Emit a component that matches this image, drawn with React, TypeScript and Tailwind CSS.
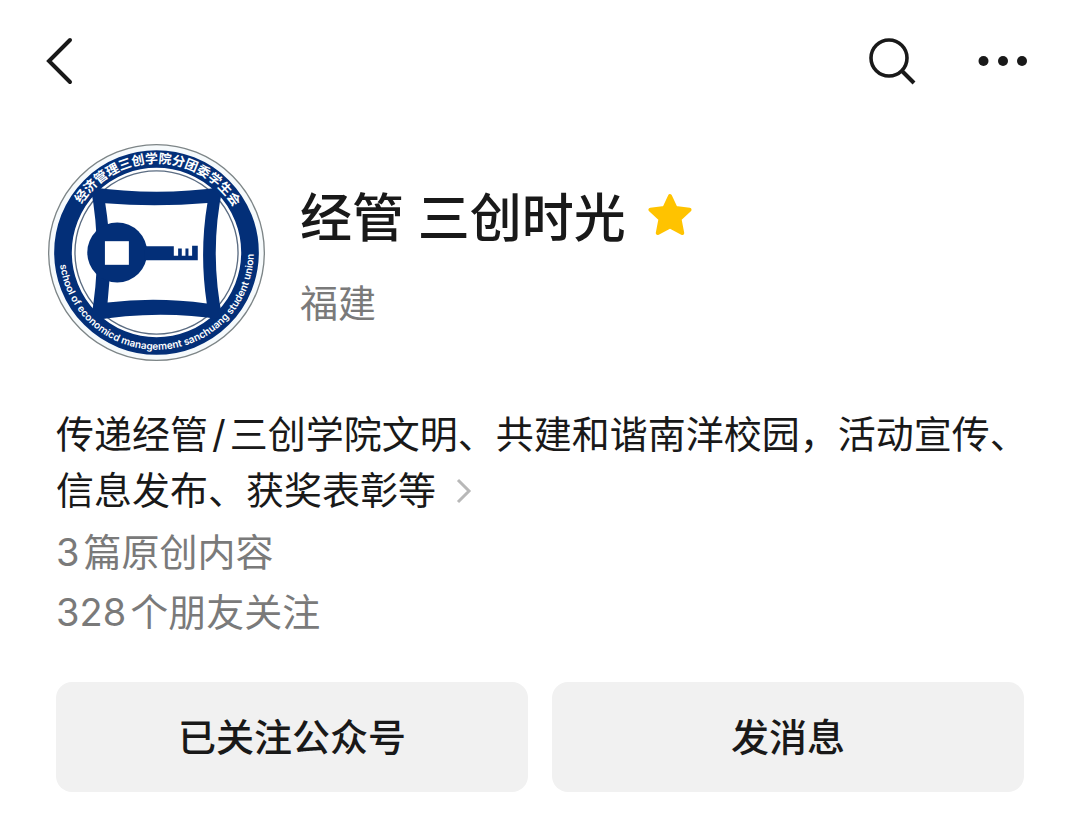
const cjk = "font-['Inter','Noto_Sans_CJK_SC',sans-serif]";

function Emblem() {
  return (
    <svg viewBox="24 26 652 652" className="size-[217px] shrink-0" role="img" aria-label="经管 三创时光">
      <defs>
        <path id="arc-top" d="M82 352 A268 268 0 0 1 618 352" />
        <path id="arc-bottom" d="M58 352 A292 292 0 0 0 642 352" />
      </defs>
      <circle cx="350" cy="352" r="324" fill="#f6fafc" stroke="#7d8587" strokeWidth="4" />
      <circle cx="350" cy="352" r="281" fill="#fff" stroke="#032f78" strokeWidth="53" />
      <circle cx="350" cy="352" r="245" fill="#fff" stroke="#5b6c82" strokeWidth="4" />
      <path
        fill="#032f78"
        fillRule="evenodd"
        d="M152 155 Q350 184 549 155 Q507 352 549 554 Q350 522 152 558 Q190 352 152 155 Z M196 204 Q350 216 503 203 Q478 352 501 505 Q350 484 203 502 Q220 352 196 204 Z"
      />
      <circle cx="232" cy="352" r="90" fill="#032f78" />
      <path fill="#032f78" d="M315 333 H402 V362 H415 V340 H426 V362 H437 V340 H446 V362 H457 V332 H474 V375 H315 Z" />
      <rect x="195" y="318" width="72" height="71" fill="#fff" />
      <text className="font-['Noto_Sans_CJK_SC',sans-serif] font-bold" fontSize="39" fill="#fff" textAnchor="middle">
        <textPath href="#arc-top" startOffset="50.6%">经济管理三创学院分团委学生会</textPath>
      </text>
      <text className="font-['Inter',sans-serif] font-semibold" fontSize="30" fill="#fff" textAnchor="middle">
        <textPath href="#arc-bottom" startOffset="51.8%">school of economicd management sanchuang student union</textPath>
      </text>
    </svg>
  );
}

export default function App() {
  return (
    <div className={`min-h-screen bg-white text-[#191919] ${cjk}`} lang="zh-CN">
      <header className="flex h-[122px] items-center justify-between px-10">
        <button type="button" aria-label="返回" className="p-1">
          <svg width="32" height="48" viewBox="0 0 32 48" fill="none" stroke="#191919" strokeWidth="4" strokeLinecap="round">
            <path d="M26 3 L5 24 L26 45" />
          </svg>
        </button>
        <div className="flex items-center gap-[62px]">
          <button type="button" aria-label="搜索">
            <svg width="50" height="50" viewBox="0 0 50 50" fill="none" stroke="#191919" strokeWidth="3.6">
              <circle cx="23" cy="22" r="18" />
              <path d="M35.5 34.5 L48 47" strokeWidth="4" />
            </svg>
          </button>
          <button type="button" aria-label="更多" className="py-4 pr-3">
            <svg width="50" height="12" viewBox="0 0 50 12" fill="#191919">
              <circle cx="5.5" cy="6" r="5" />
              <circle cx="25" cy="6" r="5" />
              <circle cx="44" cy="6" r="5" />
            </svg>
          </button>
        </div>
      </header>

      <main>
        <section className="flex items-center gap-[35px] px-12 pt-[22px]">
          <Emblem />
          <div className="pt-2">
            <h1 className="flex items-center gap-[22px] text-[52px] leading-[72px] font-medium">
              经管 三创时光
              <svg width="44" height="44" viewBox="0 0 44 44" className="mb-2" fill="#ffc300" stroke="#ffc300" strokeWidth="4" strokeLinejoin="round" role="img" aria-label="星标">
                <path d="M22 3 L27.6 15 L41.5 16.7 L31.5 26 L34.2 40 L22 33.6 L9.8 40 L12.5 26 L2.5 16.7 L16.4 15 Z" />
              </svg>
            </h1>
            <p className="mt-5 text-[38px] leading-[56px] text-[#7a7a7a]">福建</p>
          </div>
        </section>

        <section className="pt-[45px] pr-10 pl-14 text-[38px]">
          <a href="#intro" className="block leading-[56px]">
            传递经管<span className="mx-1">/</span>三创学院文明、共建和谐南洋校园，活动宣传、信息发布、获奖表彰等
            <svg className="ml-5 inline-block align-baseline" width="16" height="26" viewBox="0 0 16 26" fill="none" stroke="#b8b8b8" strokeWidth="3">
              <path d="M2 2 L13 13 L2 24" />
            </svg>
          </a>
          <p className="mt-1 flex gap-1 leading-[60px] text-[#7a7a7a]">
            <span>3</span>
            <span>篇原创内容</span>
          </p>
          <p className="flex gap-1 leading-[60px] text-[#7a7a7a]">
            <span>328</span>
            <span>个朋友关注</span>
          </p>
        </section>

        <section className="grid grid-cols-2 gap-6 px-14 pt-10 pb-8 text-[38px] font-medium">
          <button type="button" className="h-[110px] rounded-2xl bg-[#f1f1f1]">已关注公众号</button>
          <button type="button" className="h-[110px] rounded-2xl bg-[#f1f1f1]">发消息</button>
        </section>
      </main>
    </div>
  );
}
